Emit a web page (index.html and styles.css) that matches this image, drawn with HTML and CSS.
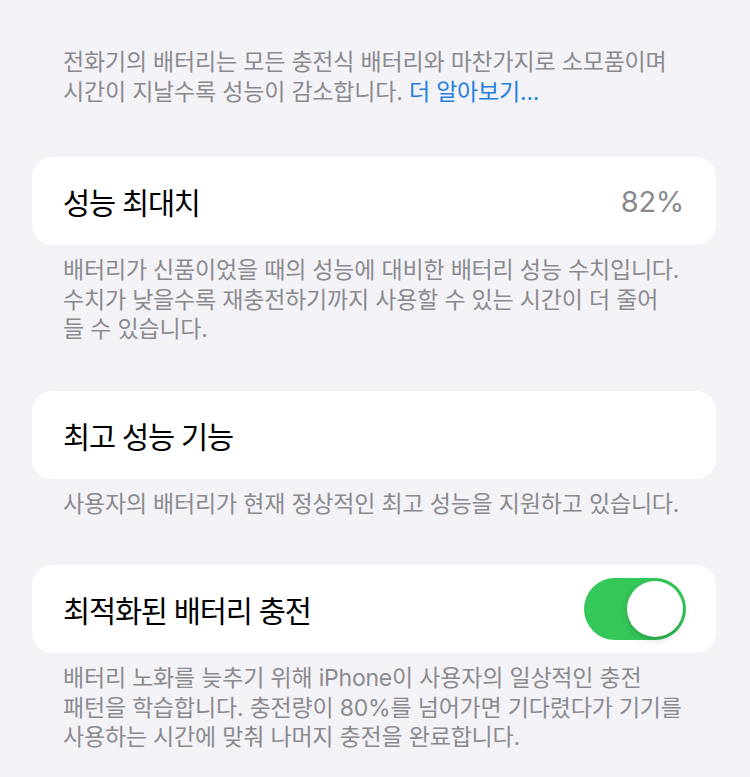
FILE: index.html
```html
<!DOCTYPE html>
<html lang="ko">
<head>
<meta charset="utf-8">
<title>배터리 성능 상태 및 충전</title>
<link rel="stylesheet" href="styles.css">
</head>
<body>
<main class="settings">
  <p class="note intro">전화기의 배터리는 모든 충전식 배터리와 마찬가지로 소모품이며<br>시간이 지날수록 성능이 감소합니다. <a class="link" href="#">더 알아보기...</a></p>

  <section class="group">
    <div class="row">
      <span class="label">성능 최대치</span>
      <span class="value">82%</span>
    </div>
  </section>
  <p class="note">배터리가 신품이었을 때의 성능에 대비한 배터리 성능 수치입니다.<br>수치가 낮을수록 재충전하기까지 사용할 수 있는 시간이 더 줄어<br>들 수 있습니다.</p>

  <section class="group">
    <div class="row">
      <span class="label">최고 성능 기능</span>
    </div>
  </section>
  <p class="note">사용자의 배터리가 현재 정상적인 최고 성능을 지원하고 있습니다.</p>

  <section class="group">
    <div class="row">
      <span class="label">최적화된 배터리 충전</span>
      <span class="switch is-on" role="switch" aria-checked="true"><span class="knob"></span></span>
    </div>
  </section>
  <p class="note">배터리 노화를 늦추기 위해 iPhone이 사용자의 일상적인 충전<br>패턴을 학습합니다. 충전량이 80%를 넘어가면 기다렸다가 기기를<br>사용하는 시간에 맞춰 나머지 충전을 완료합니다.</p>
</main>
</body>
</html>
```

FILE: styles.css
```css
html, body {
  margin: 0;
  padding: 0;
  background: #f2f2f7;
}

body {
  font-family: Inter, "Noto Sans CJK KR", sans-serif;
  -webkit-font-smoothing: antialiased;
}

.settings {
  display: flex;
  flex-direction: column;
  padding: 48px 0 0;
}

/* grey explanatory text under each group */
.note {
  margin: 11px 0 0;
  padding: 0 8px 0 63px;
  font-size: 23px;
  line-height: 29.5px;
  letter-spacing: -0.2px;
  color: #8a8a8e;
  white-space: nowrap;
}

.note.intro {
  margin: 0 0 4px;
}

.link {
  color: #1f7fdd;
  text-decoration: none;
}

/* white rounded card */
.group {
  margin: 46px 34px 0 32px;
  background: #ffffff;
  border-radius: 20px;
}

.row {
  display: flex;
  align-items: center;
  justify-content: space-between;
  height: 88px;
  padding: 0 32px 0 31px;
}

.label {
  font-size: 29.5px;
  letter-spacing: -1.2px;
  color: #000000;
}

.value {
  font-size: 29px;
  color: #8a8a8e;
  letter-spacing: -0.3px;
}

/* iOS style toggle */
.switch {
  position: relative;
  width: 102px;
  height: 62px;
  margin-right: -2px;
  border-radius: 31px;
  background: #e9e9eb;
}

.switch.is-on {
  background: #34c759;
}

.knob {
  position: absolute;
  top: 3px;
  left: 3px;
  width: 56px;
  height: 56px;
  border-radius: 50%;
  background: #ffffff;
  box-shadow: 0 3px 8px rgba(0, 0, 0, 0.15), 0 3px 1px rgba(0, 0, 0, 0.06);
}

.switch.is-on .knob {
  left: 43px;
}
```
